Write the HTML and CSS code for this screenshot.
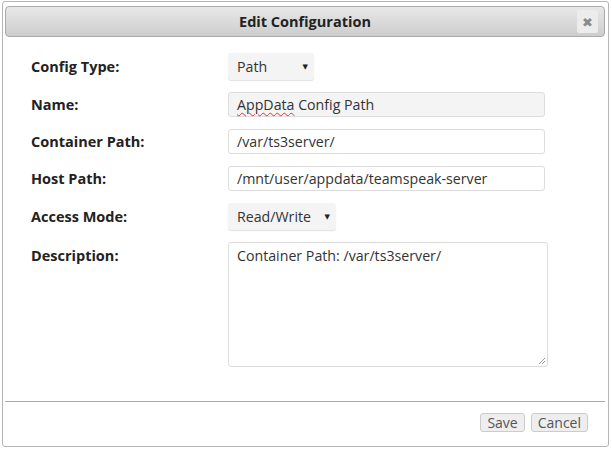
FILE: index.html
```html
<!DOCTYPE html>
<html>
<head>
<meta charset="utf-8">
<link rel="stylesheet" href="styles.css">
</head>
<body>
<div class="dialog">
  <div class="titlebar">
    <span class="title">Edit Configuration</span>
    <span class="close">&#10006;</span>
  </div>
  <div class="form">
    <div class="row">
      <div class="label">Config Type:</div>
      <div class="select sel-type"><span>Path</span><span class="arrow">&#9660;</span></div>
    </div>
    <div class="row">
      <div class="label">Name:</div>
      <div class="input input-gray"><span class="spell">AppData</span> Config Path</div>
    </div>
    <div class="row">
      <div class="label">Container Path:</div>
      <div class="input">/var/ts3server/</div>
    </div>
    <div class="row">
      <div class="label">Host Path:</div>
      <div class="input">/mnt/user/appdata/teamspeak-server</div>
    </div>
    <div class="row">
      <div class="label">Access Mode:</div>
      <div class="select sel-mode"><span>Read/Write</span><span class="arrow">&#9660;</span></div>
    </div>
    <div class="row row-top">
      <div class="label">Description:</div>
      <div class="textarea">Container Path: /var/ts3server/
        <svg class="grip" width="8" height="8" viewBox="0 0 8 8"><path d="M7 1 L1 7 M7 4 L4 7" stroke="#999" stroke-width="1"/></svg>
      </div>
    </div>
  </div>
  <div class="footer">
    <button class="btn">Save</button>
    <button class="btn">Cancel</button>
  </div>
</div>
</body>
</html>
```
FILE: styles.css
```css
* { box-sizing: border-box; }
html, body { margin: 0; padding: 0; background: #fff; }
body {
  font-family: "Open Sans", "DejaVu Sans", sans-serif;
  font-size: 14.2px;
  color: #333;
}
.dialog {
  margin: 1px 3px 2px 2px;
  width: 607px;
  height: 446px;
  border: 1px solid #b4b4b4;
  border-radius: 3px;
  padding: 4px 3px 0 2px;
  display: flex;
  flex-direction: column;
  background: #fff;
}
.titlebar {
  position: relative;
  height: 31px;
  border: 1px solid #aaa;
  border-radius: 4px;
  background: linear-gradient(#e8e8e8, #cdcdcd);
  display: flex;
  align-items: center;
  justify-content: center;
}
.title {
  font-weight: bold;
  font-size: 14.5px;
  color: #222;
}
.close {
  position: absolute;
  right: 6px;
  top: 3px;
  width: 21px;
  height: 23px;
  background: #ececec;
  border-radius: 2px;
  color: #8a8a8a;
  font-size: 13px;
  display: flex;
  align-items: center;
  justify-content: center;
}
.form {
  padding: 16px 0 0 26px;
  display: flex;
  flex-direction: column;
  gap: 12px;
}
.row {
  display: flex;
  align-items: center;
}
.row-top { align-items: flex-start; }
.row-top .label { padding-top: 4px; }
.label {
  width: 197px;
  font-weight: bold;
  font-size: 14.5px;
  color: #222;
}
.input {
  width: 317px;
  height: 25px;
  border: 1px solid #ddd;
  border-radius: 3px;
  background: #fff;
  padding: 0 8px;
  display: flex;
  align-items: center;
  white-space: pre;
}
.input-gray { background: #f4f4f4; }
.spell {
  text-decoration: underline wavy #d33;
  text-decoration-thickness: 1px;
  text-underline-offset: 2px;
}
.select {
  height: 27px;
  background: #f4f4f4;
  border-radius: 3px;
  box-shadow: 0 1px 1px rgba(0,0,0,0.12);
  padding: 0 6px 0 9px;
  display: flex;
  align-items: center;
  justify-content: space-between;
}
.sel-type { width: 86px; }
.sel-mode { width: 108px; }
.arrow { font-size: 7px; color: #222; }
.textarea {
  position: relative;
  width: 320px;
  height: 125px;
  border: 1px solid #ddd;
  border-radius: 3px;
  padding: 3px 8px;
  background: #fff;
}
.grip { position: absolute; right: 1px; bottom: 1px; }
.footer {
  margin-top: 34px;
  border-top: 1px solid #aaa;
  padding: 11px 17px 0 0;
  display: flex;
  justify-content: flex-end;
  gap: 6px;
}
.btn {
  font-family: "Open Sans", "DejaVu Sans", sans-serif;
  font-size: 14px;
  color: #555;
  background: #eee;
  border: 1px solid #ccc;
  border-radius: 3px;
  height: 19px;
  padding: 0 6px;
  line-height: 16px;
}
```
